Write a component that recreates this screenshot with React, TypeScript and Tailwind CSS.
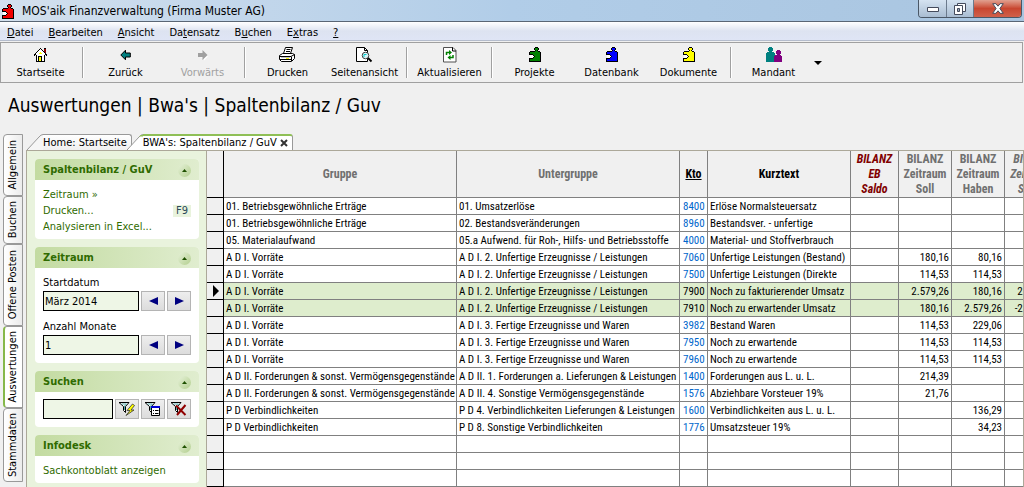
import type { ReactNode } from "react";
import { clsx } from "clsx";

const MENU = [
  ["", "D", "atei"],
  ["", "B", "earbeiten"],
  ["", "A", "nsicht"],
  ["Da", "t", "ensatz"],
  ["B", "u", "chen"],
  ["E", "x", "tras"],
  ["", "?", ""],
];

type Row = [string, string, string, string, string?, string?, string?];

const ROWS: Row[] = [
  ["01. Betriebsgewöhnliche Erträge", "01. Umsatzerlöse", "8400", "Erlöse Normalsteuersatz"],
  ["01. Betriebsgewöhnliche Erträge", "02. Bestandsveränderungen", "8960", "Bestandsver. - unfertige"],
  ["05. Materialaufwand", "05.a Aufwend. für Roh-, Hilfs- und Betriebsstoffe", "4000", "Material- und Stoffverbrauch"],
  ["A D I. Vorräte", "A D I. 2. Unfertige Erzeugnisse / Leistungen", "7060", "Unfertige Leistungen (Bestand)", "180,16", "80,16"],
  ["A D I. Vorräte", "A D I. 2. Unfertige Erzeugnisse / Leistungen", "7500", "Unfertige Leistungen (Direkte", "114,53", "114,53"],
  ["A D I. Vorräte", "A D I. 2. Unfertige Erzeugnisse / Leistungen", "7900", "Noch zu fakturierender Umsatz", "2.579,26", "180,16", "2.399,10"],
  ["A D I. Vorräte", "A D I. 2. Unfertige Erzeugnisse / Leistungen", "7910", "Noch zu erwartender Umsatz", "180,16", "2.579,26", "-2.399,10"],
  ["A D I. Vorräte", "A D I. 3. Fertige Erzeugnisse und Waren", "3982", "Bestand Waren", "114,53", "229,06"],
  ["A D I. Vorräte", "A D I. 3. Fertige Erzeugnisse und Waren", "7950", "Noch zu erwartende", "114,53", "114,53"],
  ["A D I. Vorräte", "A D I. 3. Fertige Erzeugnisse und Waren", "7960", "Noch zu erwartende", "114,53", "114,53"],
  ["A D II. Forderungen & sonst. Vermögensgegenstände", "A D II. 1. Forderungen a. Lieferungen & Leistungen", "1400", "Forderungen aus L. u. L.", "214,39"],
  ["A D II. Forderungen & sonst. Vermögensgegenstände", "A D II. 4. Sonstige Vermögensgegenstände", "1576", "Abziehbare Vorsteuer 19%", "21,76"],
  ["P D Verbindlichkeiten", "P D 4. Verbindlichkeiten Lieferungen & Leistungen", "1600", "Verbindlichkeiten aus L. u. L.", "", "136,29"],
  ["P D Verbindlichkeiten", "P D 8. Sonstige Verbindlichkeiten", "1776", "Umsatzsteuer 19%", "", "34,23"],
  ["", "", "", ""],
  ["", "", "", ""],
  ["", "", "", ""],
];

const SELECTED = ["7900", "7910"];

const PUZZLE = [
  "......###...",
  ".....#ccc#..",
  ".....#ccc#..",
  "......#c#...",
  ".#####ccc##.",
  "#cccccccccc#",
  "#cccccccccc#",
  "####ccccccc#",
  ".www#cccccc#",
  ".wwww#ccccc#",
  ".www#cccccc#",
  "####ccccccc#",
  "#cccccccccc#",
  "#cccccccccc#",
  "############",
];

const HOUSE = [
  "......#...##.",
  ".....#w#..rr.",
  "....#www#.rr.",
  "...#wwwww#rr.",
  "..#wwwywww#r.",
  ".#wwwyyywww#.",
  "##wwwwwwwww##",
  "#.#wwwwwww#.#",
  "..#w####ww#..",
  "..#w#yy#ww#..",
  "..#w#yy#ww#..",
  "..#w#yy#ww#..",
  "..#w#yy#ww#..",
  "..#########..",
];

// Icons drawn pixel by pixel, one character per pixel
function PixelIcon({ map, color = "#000" }: { map: string[]; color?: string }) {
  const fills: Record<string, string> = { "#": "#000", w: "#fff", y: "#ff0", r: "#900000", c: color };
  return (
    <svg
      width={map[0].length}
      height={map.length}
      viewBox={`0 0 ${map[0].length} ${map.length}`}
      shapeRendering="crispEdges"
      aria-hidden="true"
    >
      {map.flatMap((line, y) =>
        [...line].map((c, x) =>
          c === "." ? null : <rect key={`${x}-${y}`} x={x} y={y} width="1" height="1" fill={fills[c]} />
        )
      )}
    </svg>
  );
}

function ArrowIcon({ back }: { back?: boolean }) {
  return back ? (
    <svg width="11" height="12" viewBox="0 0 11 12" aria-hidden="true">
      <path d="M.8 6 5.500 1.200V4h4.800v4H5.500v2.800z" fill="#008080" stroke="#000" />
    </svg>
  ) : (
    <svg width="12" height="12" viewBox="0 0 12 12" aria-hidden="true">
      <path d="M11.500 7 7 11.500V9H2z" fill="#fff" />
      <path d="M10.500 6 5.500 1v3H1v4h4.500v3z" fill="#a0a0a0" />
    </svg>
  );
}

function PrinterIcon() {
  return (
    <svg width="17" height="15" viewBox="0 0 17 15" aria-hidden="true">
      <path d="M4.500 6.500 6.500.500h7l-2 6z" fill="#fff" stroke="#000" />
      <path d="M7.500 2.500h4M7 4.500h4" stroke="#000" />
      <path d="M.5 8.500 3.500 6.500h10l2 1v4l-3 3h-10l-2-2z" fill="#fff" stroke="#000" />
      <path d="M.5 9.500h11.500l3.500-2M12.500 10v4M1 12.500h11" fill="none" stroke="#000" />
      <path d="M2 10.500h9" stroke="#c0c0c0" />
      <path d="M7 11h3v1H7z" fill="#ff0" />
    </svg>
  );
}

function PreviewIcon() {
  return (
    <svg width="17" height="16" viewBox="0 0 17 16" aria-hidden="true">
      <path d="M.5.5h8l3 3v11H.5z" fill="#fff" stroke="#000" />
      <path d="M8.500.5v3h3" fill="none" stroke="#000" />
      <circle cx="9.500" cy="8.500" r="3.300" fill="#d8f4f8" stroke="#404040" />
      <path d="M8 10V7.500h2.500" fill="none" stroke="#0cc" />
      <path d="m12 11 3.500 3.500" stroke="#000" strokeWidth="1.800" />
    </svg>
  );
}

function RefreshIcon() {
  return (
    <svg width="14" height="16" viewBox="0 0 14 16" aria-hidden="true">
      <path d="M.5.5h9.500l3 3v11.500H.5z" fill="#fff" stroke="#505050" />
      <path d="M9.500.5v3.500h3.500" fill="none" stroke="#000" />
      <path d="M3.500 8V5.500h3M10 8v2.500H7" fill="none" stroke="#008000" strokeWidth="1.500" />
      <path d="M6 3v5l3-2.500zM7.500 8v5l-3-2.500z" fill="#008000" />
    </svg>
  );
}

function PeopleIcon() {
  return (
    <svg width="16" height="15" viewBox="0 0 16 15" shapeRendering="crispEdges" aria-hidden="true">
      <path d="M3 0h3v1h1v3H6v1h2v1h1v9H0V6h1V5h2V4H2V1h1z" fill="#008080" />
      <path d="M11 3h3v1h1v3h-1v1h1v1h1v6H8V9h1V8h2V7h-1V4h1z" fill="#800080" />
    </svg>
  );
}

function FunnelIcon({ kind }: { kind: "flash" | "list" | "clear" }) {
  return (
    <svg width="18" height="16" viewBox="0 0 18 16" aria-hidden="true">
      <path d="M1 1.500h10L7.500 5.500v6l-2-2v-4z" fill="#fff" stroke="#000" />
      <path d="M3.500 3h5L6.500 5v4" fill="none" stroke="#5aa" />
      {kind === "flash" && (
        <path d="M14.500 3 9 9.500h3L8 14.500l8-5.500h-3l3.500-4.500z" fill="#ff0" stroke="#333" strokeWidth=".8" />
      )}
      {kind === "list" && (
        <>
          <path d="M7.500 5.500h8v9h-8z" fill="#fff" stroke="#000" />
          <path d="M7 5h9v2H7z" fill="#0000d8" />
          <path d="M9 9.500h1M11 9.500h3.500M9 12.500h1M11 12.500h3.500" stroke="#000" />
        </>
      )}
      {kind === "clear" && <path d="M6 4.500 15.500 14M15.500 4 7 14" stroke="#900000" strokeWidth="2" />}
    </svg>
  );
}

function Tool({ label, icon, disabled }: { label: string; icon: ReactNode; disabled?: boolean }) {
  return (
    <button
      type="button"
      disabled={disabled}
      className={clsx(
        "flex w-[77px] shrink-0 flex-col items-center",
        disabled ? "text-[#a0a0a0]" : "text-black"
      )}
    >
      <span className="flex h-[21px] items-center justify-center">{icon}</span>
      <span className="leading-4">{label}</span>
    </button>
  );
}

function Separator() {
  return <div className="mx-[3px] my-[3px] w-[2px] shrink-0 border-r border-l border-r-white border-l-[#a0a0a0]" />;
}

function SideTab({ label, className, active }: { label: string; className: string; active?: boolean }) {
  return (
    <button
      type="button"
      className={clsx(
        "flex w-5 items-center justify-center rounded-l-[4px] border border-[#999]",
        active ? "border-l-2 border-l-[#86b84a] bg-white" : "bg-linear-to-r from-white to-[#ececec]",
        className
      )}
    >
      <span className="rotate-180 whitespace-nowrap [writing-mode:vertical-rl]">{label}</span>
    </button>
  );
}

function Card({ title, children }: { title: string; children: ReactNode }) {
  return (
    <section className="overflow-hidden rounded-[4px] bg-white">
      <h2 className="flex h-[21px] items-center justify-between bg-linear-to-r from-[#c3dba1] to-[#e0edcf] px-2 pt-px text-[11px] font-bold text-[#2f6b00]">
        {title}
        <button
          type="button"
          aria-label={`${title} einklappen`}
          className="flex size-[13px] items-center justify-center rounded-full bg-linear-to-br from-[#e6f1d8] to-[#b4cf90]"
        >
          <svg width="5" height="3" viewBox="0 0 5 3" aria-hidden="true">
            <path d="M0 3 2.500 0 5 3z" fill="#1e5000" />
          </svg>
        </button>
      </h2>
      <div className="px-2">{children}</div>
    </section>
  );
}

function SquareButton({ label, children }: { label: string; children: ReactNode }) {
  return (
    <button
      type="button"
      aria-label={label}
      className="flex h-5 w-6 shrink-0 items-center justify-center border border-[#b4b4b4] bg-linear-to-b from-[#eee] to-[#dcdcdc]"
    >
      {children}
    </button>
  );
}

function Stepper({ id, label, value }: { id: string; label: string; value: string }) {
  return (
    <div>
      <label htmlFor={id} className="block pt-px leading-4 text-black">
        {label}
      </label>
      <div className="flex gap-[2px]">
        <input
          id={id}
          defaultValue={value}
          className="h-5 w-0 flex-1 border border-black bg-[#eef6e6] px-px text-black outline-none"
        />
        <SquareButton label={`${label} zurück`}>
          <svg width="9" height="8" viewBox="0 0 9 8" aria-hidden="true">
            <path d="M0 4 9 0v8z" fill="#000080" />
          </svg>
        </SquareButton>
        <SquareButton label={`${label} vor`}>
          <svg width="9" height="8" viewBox="0 0 9 8" aria-hidden="true">
            <path d="M9 4 0 0v8z" fill="#000080" />
          </svg>
        </SquareButton>
      </div>
    </div>
  );
}

function PageTab({ label, active }: { label: string; active?: boolean }) {
  return (
    <div className={clsx("flex h-4 items-stretch", active && "-ml-[5px]")}>
      <svg width="16" height="16" viewBox="0 0 16 16" className="shrink-0" aria-hidden="true">
        <path d="M0 16 12 3Q14 .5 16 .5V16z" fill={active ? "#fff" : "#f6f6f6"} />
        <path d="M0 16 12 3Q14 .5 16 .5" fill="none" stroke="#999" />
        {active && <path d="M12 2.500 14 1h2v1.500z" fill="#8fbf56" />}
      </svg>
      <div
        className={clsx(
          "flex items-center gap-[3px] rounded-tr-[3px] border-r border-r-[#999] pr-1",
          active
            ? "border-t-2 border-t-[#8fbf56] bg-white"
            : "border-t border-t-[#999] bg-linear-to-b from-white to-[#f0f0f0] pt-px"
        )}
      >
        <button type="button" className="leading-3 whitespace-nowrap">
          {label}
        </button>
        {active && (
          <button type="button" aria-label="Tab schließen">
            <svg width="8" height="8" viewBox="0 0 8 8" aria-hidden="true">
              <path d="m1 1 6 6M7 1 1 7" stroke="#333" strokeWidth="2" />
            </svg>
          </button>
        )}
      </div>
    </div>
  );
}

function Sidebar() {
  return (
    <aside className="flex w-[181px] shrink-0 flex-col gap-2 border-r border-l border-[#aca899] bg-[#e9f3dd] px-[7px] pt-2 pl-2 text-[#2f6b00]">
      <Card title="Spaltenbilanz / GuV">
        <ul className="pt-[7px] pb-1 leading-4">
          <li>
            <a href="#zeitraum">Zeitraum »</a>
          </li>
          <li className="flex justify-between">
            <a href="#drucken">Drucken...</a>
            <kbd className="my-[2px] bg-[#e9f3dd] px-[3px] font-[inherit] leading-3 text-[#2a4a5a]">F9</kbd>
          </li>
          <li>
            <a href="#excel">Analysieren in Excel...</a>
          </li>
        </ul>
      </Card>
      <Card title="Zeitraum">
        <div className="flex flex-col gap-[7px] pt-[6px] pb-2">
          <Stepper id="start" label="Startdatum" value="März 2014" />
          <Stepper id="monate" label="Anzahl Monate" value="1" />
        </div>
      </Card>
      <Card title="Suchen">
        <div className="flex gap-[2px] pt-[7px] pb-2">
          <input
            aria-label="Suchbegriff"
            className="h-5 w-0 flex-1 border border-black bg-[#eef6e6] px-px outline-none"
          />
          <SquareButton label="Filter anwenden">
            <FunnelIcon kind="flash" />
          </SquareButton>
          <SquareButton label="Filter auswählen">
            <FunnelIcon kind="list" />
          </SquareButton>
          <SquareButton label="Filter löschen">
            <FunnelIcon kind="clear" />
          </SquareButton>
        </div>
      </Card>
      <Card title="Infodesk">
        <p className="pt-[7px] pb-1 leading-4">
          <a href="#sachkonto">Sachkontoblatt anzeigen</a>
        </p>
      </Card>
    </aside>
  );
}

function Grid() {
  const head = "h-[47px] border-r border-b border-[#808080] p-0 text-[12px] leading-[15px]";
  const cell = "h-[17px] border-r border-b border-[#808080] p-0 pt-[2px] leading-[14px] whitespace-nowrap";

  return (
    <div className="min-w-0 flex-1 overflow-hidden border-r border-r-[#aca899]">
      <table className="w-[851px] table-fixed border-separate border-spacing-0 font-['Roboto_Condensed','Liberation_Sans',sans-serif] text-[11px]">
        <colgroup>
          <col className="w-[17px]" />
          <col className="w-[233px]" />
          <col className="w-[223px]" />
          <col className="w-[28px]" />
          <col className="w-[143px]" />
          <col className="w-[48px]" />
          <col className="w-[53px]" />
          <col className="w-[53px]" />
          <col className="w-[53px]" />
        </colgroup>
        <thead className="bg-[#f0f0f0] text-[#707070]">
          <tr>
            <td className="border-r border-b border-black" />
            <th className={head}>Gruppe</th>
            <th className={head}>Untergruppe</th>
            <th className={clsx(head, "text-black underline")}>Kto</th>
            <th className={clsx(head, "text-black")}>Kurztext</th>
            <th className={clsx(head, "text-[#800000] italic")}>
              BILANZ
              <br />
              EB
              <br />
              Saldo
            </th>
            <th className={head}>
              BILANZ
              <br />
              Zeitraum
              <br />
              Soll
            </th>
            <th className={head}>
              BILANZ
              <br />
              Zeitraum
              <br />
              Haben
            </th>
            <th className={clsx(head, "italic")}>
              BILANZ
              <br />
              Zeitraum
              <br />
              Saldo
            </th>
          </tr>
        </thead>
        <tbody>
          {ROWS.map(([group, sub, account, text, debit, credit, balance], i) => {
            const selected = SELECTED.includes(account);
            return (
              <tr key={i} className={selected ? "bg-[#deedcd]" : "bg-white"}>
                <td className="h-[17px] border-r border-b border-black bg-[#f0f0f0] p-0">
                  {account === SELECTED[0] && (
                    <svg width="6" height="12" viewBox="0 0 6 12" className="ml-[6px]" aria-label="Aktuelle Zeile">
                      <path d="M0 0 6 6 0 12z" />
                    </svg>
                  )}
                </td>
                <td className={clsx(cell, "pl-[2px]")}>{group}</td>
                <td className={clsx(cell, "pl-[2px]")}>{sub}</td>
                <td className={clsx(cell, "pl-[3px]", !selected && "text-[#0066cc]")}>{account}</td>
                <td className={clsx(cell, "pl-[2px]")}>{text}</td>
                <td className={cell} />
                <td className={clsx(cell, "pr-[2px] text-right")}>{debit}</td>
                <td className={clsx(cell, "pr-[2px] text-right")}>{credit}</td>
                <td className={clsx(cell, "pr-[2px] text-right")}>{balance}</td>
              </tr>
            );
          })}
        </tbody>
      </table>
    </div>
  );
}

export default function App() {
  return (
    <div className="flex min-h-screen flex-col overflow-hidden bg-[#f0f0f0] font-['DejaVu_Sans_Condensed','DejaVu_Sans',sans-serif] text-[11px] text-black">
      {/* Title bar */}
      <header className="flex h-[22px] items-start justify-between border-b border-[#5a6675] bg-linear-to-r from-[#d3e0ee] via-[#b1cde8] to-[#a9c5e0] pl-[2px]">
        <div className="flex items-center gap-2 pt-[3px]">
          <PixelIcon map={PUZZLE} color="#f00000" />
          <h1 className="text-[12px] leading-4 whitespace-nowrap">MOS'aik Finanzverwaltung (Firma Muster AG)</h1>
        </div>
        <div className="mr-[2px] flex h-[18px] overflow-hidden rounded-b-[4px] border border-t-0 border-[#4a5766]">
          <button
            type="button"
            aria-label="Minimieren"
            className="flex w-7 items-center justify-center border-r border-[#6b7a8c] bg-linear-to-b from-[#d5e3f1] to-[#a9bdd2] pt-[2px]"
          >
            <svg width="12" height="5" viewBox="0 0 12 5" aria-hidden="true">
              <path d="M.5.5h11v4H.5z" fill="#fff" stroke="#444b5c" />
            </svg>
          </button>
          <button
            type="button"
            aria-label="Verkleinern"
            className="flex w-[27px] items-center justify-center border-r border-[#6b7a8c] bg-linear-to-b from-[#d5e3f1] to-[#a9bdd2]"
          >
            <svg width="12" height="12" viewBox="0 0 12 12" aria-hidden="true">
              <path d="M3.500.5h8v8h-8z" fill="#fff" stroke="#444b5c" />
              <path d="M.5 2.500h8v9h-8z" fill="#fff" stroke="#444b5c" />
              <path d="M3.500 5.500h2v3h-2z" fill="#9ab" stroke="#444b5c" />
            </svg>
          </button>
          <button
            type="button"
            aria-label="Schließen"
            className="flex w-[47px] items-center justify-center bg-linear-to-b from-[#e0a090] via-[#c84630] to-[#d0604a]"
          >
            <svg width="12" height="11" viewBox="0 0 12 11" aria-hidden="true">
              <path
                d="M.7.700h3.200L6 3.200 8.100.700h3.200L7.900 5.500l3.400 4.800H8.100L6 7.800l-2.100 2.500H.7l3.400-4.800z"
                fill="#fff"
                stroke="#444b5c"
              />
            </svg>
          </button>
        </div>
      </header>

      {/* Menu */}
      <nav className="flex h-[19px] items-center gap-[15px] border-b border-[#b4bccc] bg-linear-to-b from-white via-[#dde3f1] to-[#dfe5f5] pt-[3px] pl-[7px]">
        {MENU.map(([before, key, after]) => (
          <button key={before + key + after} type="button" className="leading-4">
            {before}
            <span className="underline">{key}</span>
            {after}
          </button>
        ))}
      </nav>

      {/* Toolbar */}
      <div className="mt-px mr-px flex h-[41px] border border-[#a0a0a0] pl-px">
        <div className="flex py-px">
          <Tool label="Startseite" icon={<PixelIcon map={HOUSE} />} />
          <Separator />
          <Tool label="Zurück" icon={<ArrowIcon back />} />
          <Tool label="Vorwärts" icon={<ArrowIcon />} disabled />
          <Separator />
          <Tool label="Drucken" icon={<PrinterIcon />} />
          <Tool label="Seitenansicht" icon={<PreviewIcon />} />
          <Separator />
          <Tool label="Aktualisieren" icon={<RefreshIcon />} />
          <Separator />
          <Tool label="Projekte" icon={<PixelIcon map={PUZZLE} color="#008000" />} />
          <Tool label="Datenbank" icon={<PixelIcon map={PUZZLE} color="#0000ff" />} />
          <Tool label="Dokumente" icon={<PixelIcon map={PUZZLE} color="#ffff00" />} />
          <Separator />
          <Tool label="Mandant" icon={<PeopleIcon />} />
          <button type="button" aria-label="Mandant wählen" className="flex w-3 items-center justify-center">
            <svg width="8" height="4" viewBox="0 0 8 4" aria-hidden="true">
              <path d="M0 0h8L4 4z" />
            </svg>
          </button>
        </div>
      </div>

      <p className="h-[51px] pt-[10px] pl-2 text-[19px] leading-6 whitespace-nowrap">
        Auswertungen | Bwa's | Spaltenbilanz / Guv
      </p>

      <div className="flex flex-1">
        <nav className="ml-[3px] flex shrink-0 flex-col">
          <SideTab label="Allgemein" className="h-[62px]" />
          <SideTab label="Buchen" className="h-12" />
          <SideTab label="Offene Posten" className="h-[82px]" />
          <SideTab label="Auswertungen" className="h-[82px]" active />
          <SideTab label="Stammdaten" className="h-[74px]" />
        </nav>
        <main className="ml-[3px] flex min-w-0 flex-1 flex-col">
          <div className="flex pl-px">
            <PageTab label="Home: Startseite" />
            <PageTab label="BWA's: Spaltenbilanz / GuV" active />
          </div>
          <div className="flex flex-1 border-t border-[#aca899]">
            <Sidebar />
            <Grid />
          </div>
        </main>
      </div>
    </div>
  );
}
